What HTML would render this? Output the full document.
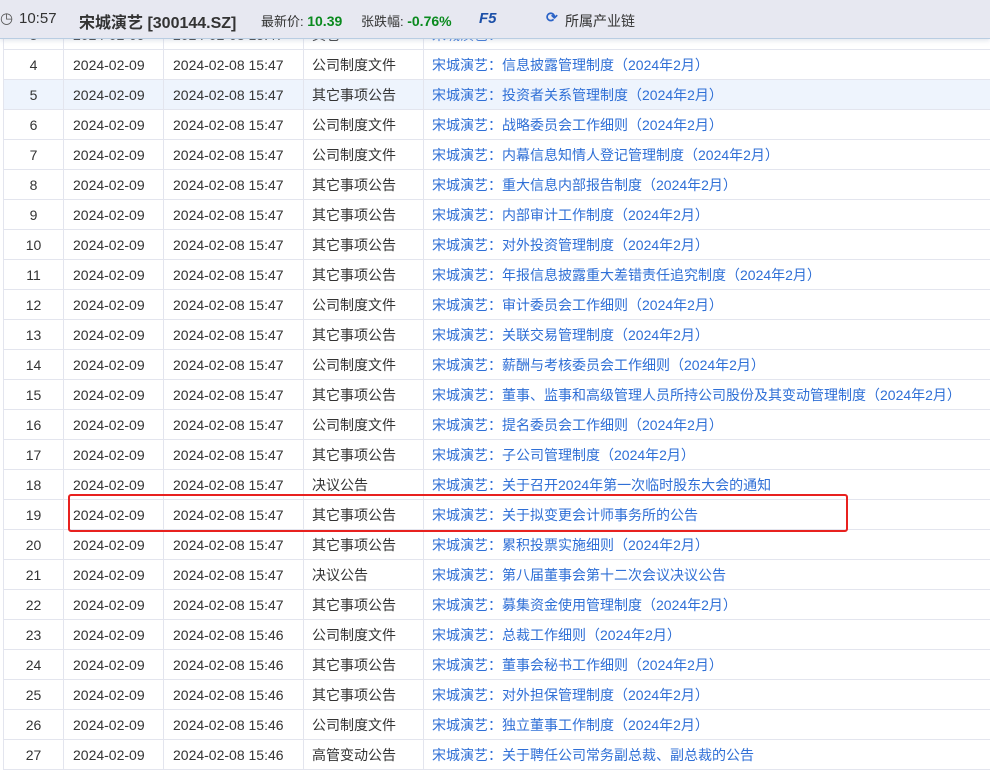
<!DOCTYPE html><html><head><meta charset="utf-8"><style>
body{margin:0;width:990px;height:770px;overflow:hidden;background:#fff;font-family:"Liberation Sans","Noto Sans CJK SC",sans-serif;position:relative}
.hd{position:absolute;left:0;top:0;width:990px;height:38px;background:#e7e8f1;border-bottom:1px solid #b9cde2;box-shadow:0 2px 4px rgba(180,190,210,.35);z-index:2;font-size:14px;color:#333;white-space:nowrap}
.hd span{position:absolute;top:10px}
table{position:absolute;left:3px;top:19px;border-collapse:collapse;table-layout:fixed;width:1000px;font-size:14px;color:#333;font-family:"Liberation Sans","Noto Sans CJK SC",sans-serif}
td{height:29px;border:1px solid #e3e5ee;padding:0;white-space:nowrap;overflow:hidden}
td:nth-child(1){text-align:center}
td:nth-child(2){padding-left:9px}
td:nth-child(3){padding-left:9px}
td:nth-child(4){padding-left:8px}
td:nth-child(5){padding-left:8px;color:#2f6fd6}
tr.h td{background:#eef4fd}
.box{position:absolute;left:68px;top:494px;width:776px;height:34px;border:2px solid #e8211f;border-radius:3px;z-index:3}
</style></head><body>
<div class="hd">
<span style="left:0;top:9px;font-size:15px;color:#555">&#9719;</span>
<span style="left:19px;font-size:15px">10:57</span>
<span style="left:79px;font-size:16px;font-weight:bold;top:9px">宋城演艺 [300144.SZ]</span>
<span style="left:261px;font-size:13px;top:11px">最新价: <b style="color:#0a8a1e;font-size:14px">10.39</b></span>
<span style="left:361px;font-size:13px;top:11px">张跌幅: <b style="color:#0a8a1e;font-size:14px">-0.76%</b></span>
<span style="left:479px;font-weight:bold;font-style:italic;color:#1b4fa8;font-size:15px;top:10px">F5</span>
<span style="left:546px;color:#2b63c7;font-weight:bold;top:9px">&#10227;</span>
<span style="left:565px;font-size:14px;top:11px">所属产业链</span>
</div>
<table>
<colgroup><col style="width:60px"><col style="width:100px"><col style="width:140px"><col style="width:120px"><col></colgroup>
<tr><td>3</td><td>2024-02-09</td><td>2024-02-08 15:47</td><td>其它</td><td>宋城演艺：</td></tr>
<tr><td>4</td><td>2024-02-09</td><td>2024-02-08 15:47</td><td>公司制度文件</td><td>宋城演艺：信息披露管理制度（2024年2月）</td></tr>
<tr class="h"><td>5</td><td>2024-02-09</td><td>2024-02-08 15:47</td><td>其它事项公告</td><td>宋城演艺：投资者关系管理制度（2024年2月）</td></tr>
<tr><td>6</td><td>2024-02-09</td><td>2024-02-08 15:47</td><td>公司制度文件</td><td>宋城演艺：战略委员会工作细则（2024年2月）</td></tr>
<tr><td>7</td><td>2024-02-09</td><td>2024-02-08 15:47</td><td>公司制度文件</td><td>宋城演艺：内幕信息知情人登记管理制度（2024年2月）</td></tr>
<tr><td>8</td><td>2024-02-09</td><td>2024-02-08 15:47</td><td>其它事项公告</td><td>宋城演艺：重大信息内部报告制度（2024年2月）</td></tr>
<tr><td>9</td><td>2024-02-09</td><td>2024-02-08 15:47</td><td>其它事项公告</td><td>宋城演艺：内部审计工作制度（2024年2月）</td></tr>
<tr><td>10</td><td>2024-02-09</td><td>2024-02-08 15:47</td><td>其它事项公告</td><td>宋城演艺：对外投资管理制度（2024年2月）</td></tr>
<tr><td>11</td><td>2024-02-09</td><td>2024-02-08 15:47</td><td>其它事项公告</td><td>宋城演艺：年报信息披露重大差错责任追究制度（2024年2月）</td></tr>
<tr><td>12</td><td>2024-02-09</td><td>2024-02-08 15:47</td><td>公司制度文件</td><td>宋城演艺：审计委员会工作细则（2024年2月）</td></tr>
<tr><td>13</td><td>2024-02-09</td><td>2024-02-08 15:47</td><td>其它事项公告</td><td>宋城演艺：关联交易管理制度（2024年2月）</td></tr>
<tr><td>14</td><td>2024-02-09</td><td>2024-02-08 15:47</td><td>公司制度文件</td><td>宋城演艺：薪酬与考核委员会工作细则（2024年2月）</td></tr>
<tr><td>15</td><td>2024-02-09</td><td>2024-02-08 15:47</td><td>其它事项公告</td><td>宋城演艺：董事、监事和高级管理人员所持公司股份及其变动管理制度（2024年2月）</td></tr>
<tr><td>16</td><td>2024-02-09</td><td>2024-02-08 15:47</td><td>公司制度文件</td><td>宋城演艺：提名委员会工作细则（2024年2月）</td></tr>
<tr><td>17</td><td>2024-02-09</td><td>2024-02-08 15:47</td><td>其它事项公告</td><td>宋城演艺：子公司管理制度（2024年2月）</td></tr>
<tr><td>18</td><td>2024-02-09</td><td>2024-02-08 15:47</td><td>决议公告</td><td>宋城演艺：关于召开2024年第一次临时股东大会的通知</td></tr>
<tr><td>19</td><td>2024-02-09</td><td>2024-02-08 15:47</td><td>其它事项公告</td><td>宋城演艺：关于拟变更会计师事务所的公告</td></tr>
<tr><td>20</td><td>2024-02-09</td><td>2024-02-08 15:47</td><td>其它事项公告</td><td>宋城演艺：累积投票实施细则（2024年2月）</td></tr>
<tr><td>21</td><td>2024-02-09</td><td>2024-02-08 15:47</td><td>决议公告</td><td>宋城演艺：第八届董事会第十二次会议决议公告</td></tr>
<tr><td>22</td><td>2024-02-09</td><td>2024-02-08 15:47</td><td>其它事项公告</td><td>宋城演艺：募集资金使用管理制度（2024年2月）</td></tr>
<tr><td>23</td><td>2024-02-09</td><td>2024-02-08 15:46</td><td>公司制度文件</td><td>宋城演艺：总裁工作细则（2024年2月）</td></tr>
<tr><td>24</td><td>2024-02-09</td><td>2024-02-08 15:46</td><td>其它事项公告</td><td>宋城演艺：董事会秘书工作细则（2024年2月）</td></tr>
<tr><td>25</td><td>2024-02-09</td><td>2024-02-08 15:46</td><td>其它事项公告</td><td>宋城演艺：对外担保管理制度（2024年2月）</td></tr>
<tr><td>26</td><td>2024-02-09</td><td>2024-02-08 15:46</td><td>公司制度文件</td><td>宋城演艺：独立董事工作制度（2024年2月）</td></tr>
<tr><td>27</td><td>2024-02-09</td><td>2024-02-08 15:46</td><td>高管变动公告</td><td>宋城演艺：关于聘任公司常务副总裁、副总裁的公告</td></tr>
</table>
<div class="box"></div>
</body></html>
